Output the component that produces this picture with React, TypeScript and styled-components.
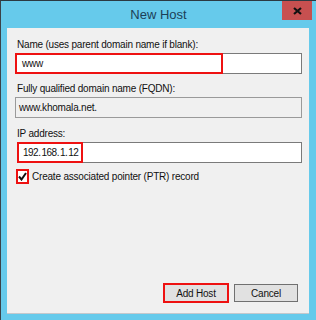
import styled, { createGlobalStyle } from 'styled-components';

const Global = createGlobalStyle`
  html, body { margin: 0; padding: 0; }
  body { font-family: "Liberation Sans", Arial, sans-serif; }
`;

const Window = styled.div`
  position: relative;
  width: 316px;
  height: 320px;
  box-sizing: border-box;
  background: #66caeb;
  border-top: 1px solid #2b3a42;
  border-left: 1px solid #3b4248;
  display: flex;
  flex-direction: column;
`;

const TitleBar = styled.div`
  height: 27px;
  display: flex;
  align-items: center;
  justify-content: center;
  font-size: 13px;
  color: #1c3f57;
`;

const CloseButton = styled.div`
  position: absolute;
  top: 0;
  left: 281px;
  width: 30px;
  height: 19px;
  background: #c75050;
  display: flex;
  align-items: center;
  justify-content: center;
`;

const Panel = styled.div`
  margin: 0 7px 0 6px;
  height: 286px;
  box-sizing: border-box;
  background: #f0f0f0;
  border-bottom: 1px solid #c4c8cc;
  padding: 9px 7px 0 8px;
  display: flex;
  flex-direction: column;
  font-size: 10px;
  letter-spacing: -0.2px;
  color: #111;
`;

const Label = styled.div<{ $top?: number }>`
  height: 16px;
  line-height: 16px;
  margin-top: ${(p) => p.$top ?? 0}px;
  padding-left: 2px;
`;

const Field = styled.div<{ $readOnly?: boolean; $indent?: number; $pad?: number }>`
  position: relative;
  height: 21px;
  box-sizing: border-box;
  margin-left: ${(p) => p.$indent ?? 0}px;
  border: 1px solid ${(p) => (p.$readOnly ? '#9a9a9a' : '#7a7a7a')};
  background: ${(p) => (p.$readOnly ? '#f0f0f0' : '#ffffff')};
  display: flex;
  align-items: center;
  padding-left: ${(p) => p.$pad ?? 6}px;
`;

const Highlight = styled.div<{ $w: number }>`
  position: absolute;
  top: -1px;
  left: -1px;
  width: ${(p) => p.$w}px;
  bottom: -1px;
  border: 2px solid #ee1111;
  box-sizing: border-box;
`;

const IpText = styled.span`
  letter-spacing: -0.5px;
`;

const Dot = styled.span`
  margin-right: 1px;
`;

const CheckRow = styled.div`
  display: flex;
  align-items: center;
  gap: 3px;
  margin-top: 6px;
  margin-left: 1px;
`;

const CheckBox = styled.div`
  width: 13px;
  height: 15px;
  box-sizing: border-box;
  border: 2px solid #ee1111;
  background: #fff;
  display: flex;
  align-items: center;
  justify-content: center;
`;

const Spacer = styled.div`
  flex: 1;
`;

const ButtonRow = styled.div`
  display: flex;
  justify-content: flex-end;
  align-items: center;
  gap: 5px;
  margin-bottom: 10px;
  padding-right: 4px;
`;

const Button = styled.div<{ $marked?: boolean }>`
  width: ${(p) => (p.$marked ? 66 : 64)}px;
  height: ${(p) => (p.$marked ? 20 : 18)}px;
  box-sizing: border-box;
  border: ${(p) => (p.$marked ? '2px solid #ee1111' : '1px solid #707070')};
  background: #e1e1e1;
  display: flex;
  align-items: center;
  justify-content: center;
  color: #111;
`;

export default function App() {
  return (
    <>
      <Global />
      <Window>
        <TitleBar>New Host</TitleBar>
        <CloseButton>
          <svg width="9" height="8" viewBox="0 0 9 8">
            <path d="M1 1 L8 7 M8 1 L1 7" stroke="#111" strokeWidth="2.2" />
          </svg>
        </CloseButton>
        <Panel>
          <Label>Name (uses parent domain name if blank):</Label>
          <Field>
            www
            <Highlight $w={208} />
          </Field>
          <Label $top={7}>Fully qualified domain name (FQDN):</Label>
          <Field $readOnly $pad={3}>www.khomala.net.</Field>
          <Label $top={8}>IP address:</Label>
          <Field $indent={2} $pad={5}>
            <IpText>
              192<Dot>.</Dot>168<Dot>.</Dot>1<Dot>.</Dot>12
            </IpText>
            <Highlight $w={66} />
          </Field>
          <CheckRow>
            <CheckBox>
              <svg width="9" height="9" viewBox="0 0 9 9">
                <path d="M1 4.5 L3.5 7.5 L8 1" stroke="#111" strokeWidth="2" fill="none" />
              </svg>
            </CheckBox>
            Create associated pointer (PTR) record
          </CheckRow>
          <Spacer />
          <ButtonRow>
            <Button $marked>Add Host</Button>
            <Button>Cancel</Button>
          </ButtonRow>
        </Panel>
      </Window>
    </>
  );
}
